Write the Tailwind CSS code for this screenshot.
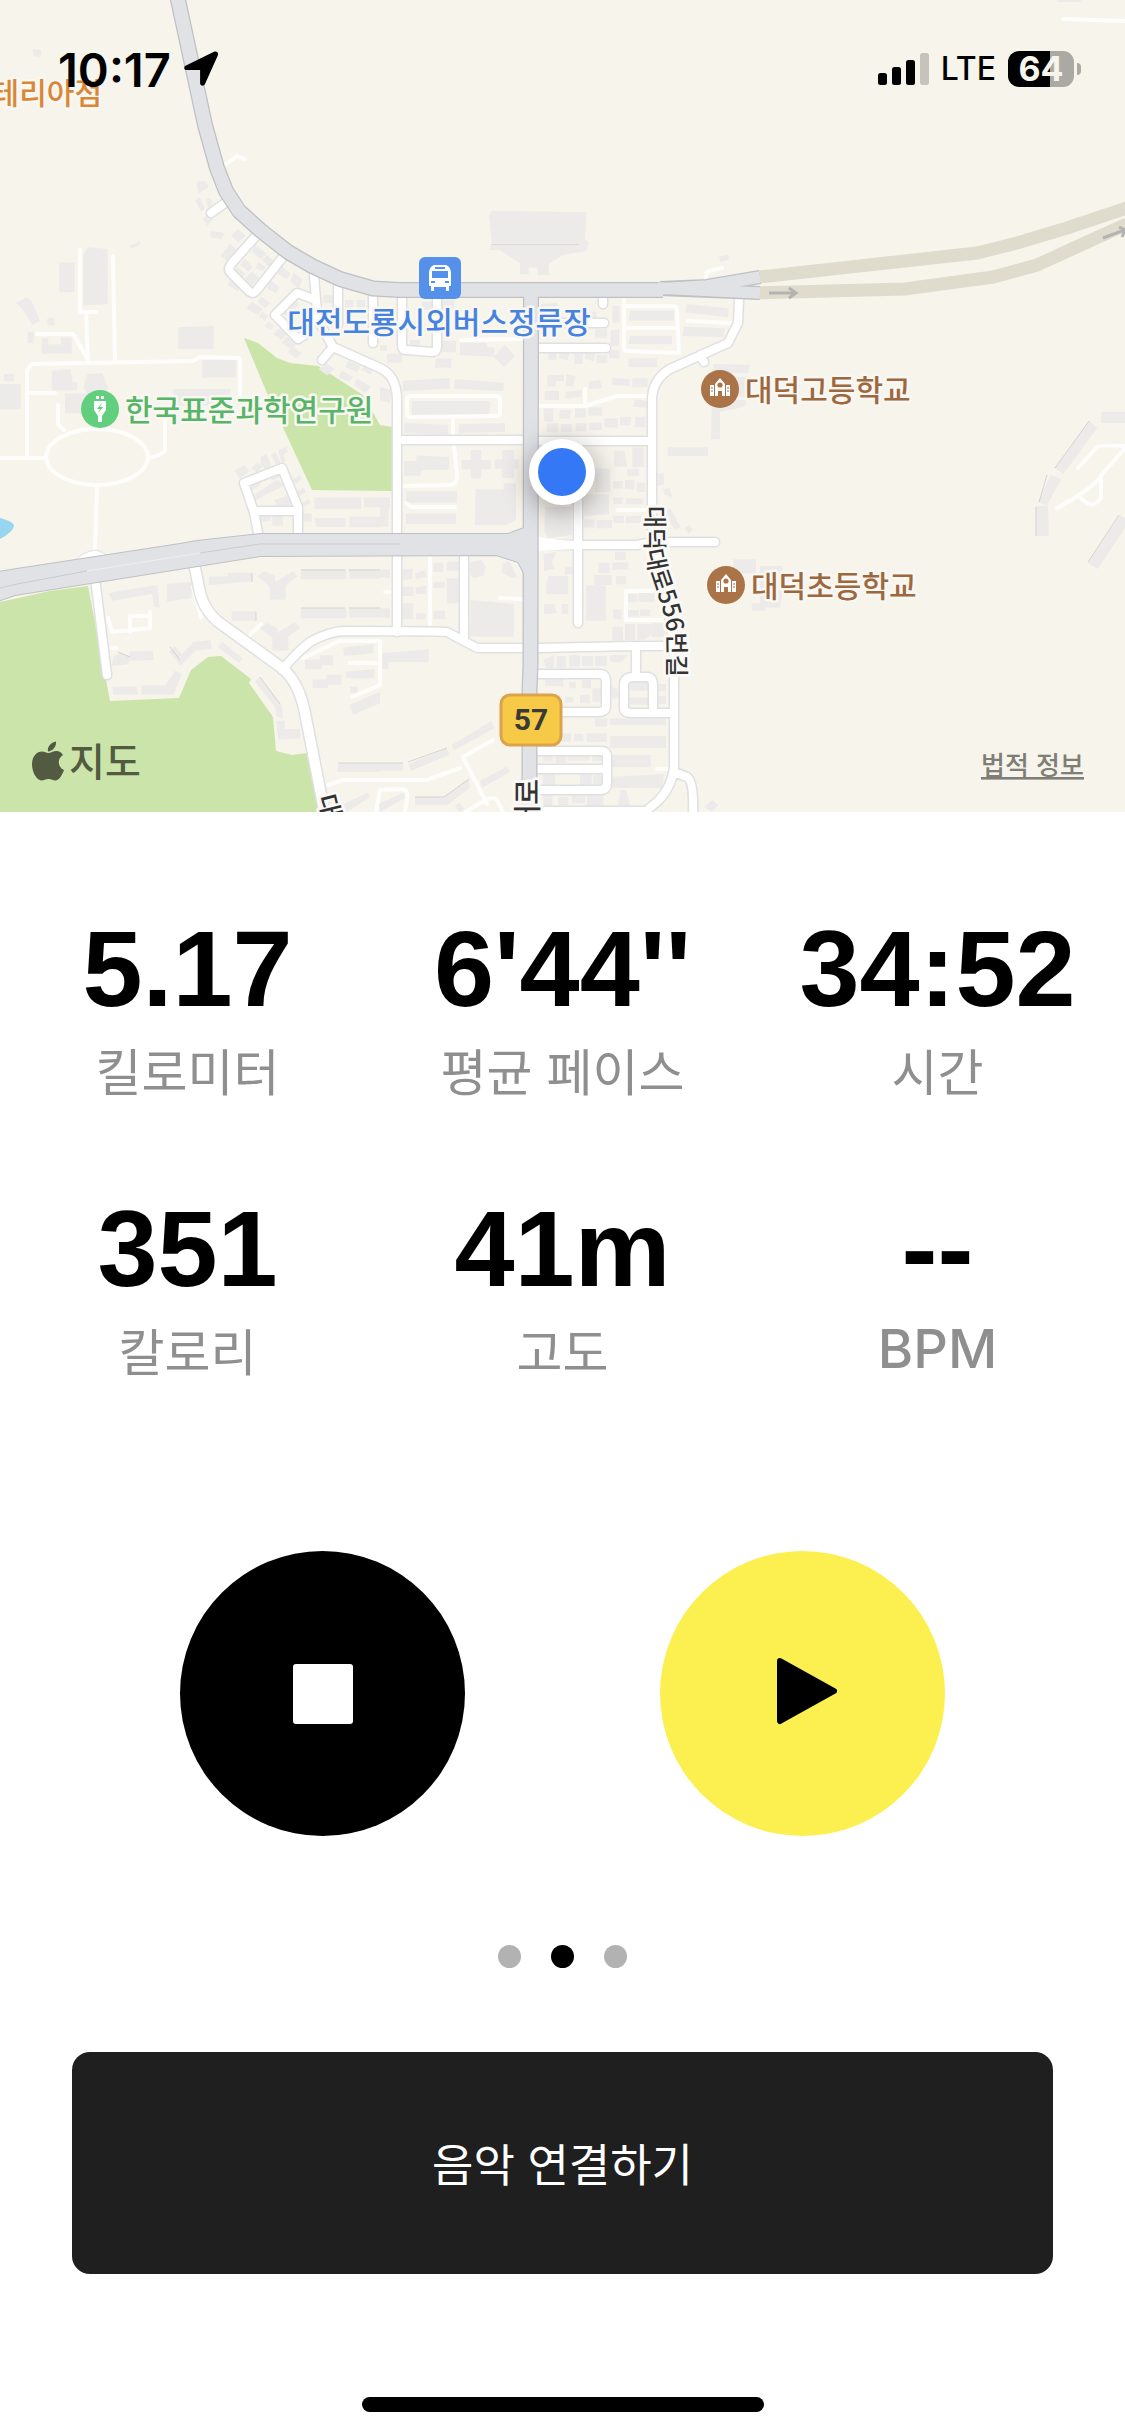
<!DOCTYPE html>
<html lang="ko">
<head>
  <meta charset="UTF-8">
  <meta name="viewport" content="width=device-width, initial-scale=1.0">
  <title>러닝</title>
  <script src="https://cdn.jsdelivr.net/npm/@tailwindcss/browser@4"></script>
</head>
<body class="bg-white text-black font-['Noto_Sans_CJK_KR',sans-serif]">

  <div class="relative">
    <!-- Status bar -->
    <header class="absolute inset-x-0 top-0 flex h-[138px] items-center justify-between pl-[58px] pr-[44px] font-['Inter',sans-serif]">
      <div class="flex items-center gap-3">
        <span class="text-[47px] leading-none font-semibold">10:17</span>
        <svg class="size-9" viewBox="0 0 36 36"><path d="M3 14.5 31 .8c2.400-1.100 4.800.8 3.900 3.400L22 33c-1.200 2.700-4.900 2-4.900-.8V19H3.800C.8 19 .3 15.800 3 14.500z"/></svg>
      </div>
      <div class="flex items-center gap-3">
        <svg class="h-8 w-[51px]" viewBox="0 0 51 32">
          <rect y="20" width="9" height="12" rx="2.500"/>
          <rect x="14" y="14" width="9" height="18" rx="2.500"/>
          <rect x="28" y="7" width="9" height="25" rx="2.500"/>
          <rect x="42" width="9" height="32" rx="2.500" fill="#c6c3bc"/>
        </svg>
        <span class="text-[32px] leading-none font-medium">LTE</span>
        <div class="flex items-center gap-[3px]">
          <span class="flex h-9 w-[66px] items-center justify-center rounded-[11px] bg-linear-to-r from-black from-64% to-[#aba9a3] to-64% text-[34px] leading-none font-bold text-[#f7f4eb]">64</span>
          <span class="h-3 w-1 rounded-r-full bg-[#aba9a3]"></span>
        </div>
      </div>
    </header>

    <!-- Map -->
    <svg class="block h-auto w-full bg-[#f7f4eb]" viewBox="0 0 1125 812" role="img" aria-label="지도">
      <defs>
        <path id="streets" d="M283 257 256 291Q252 295 248 290L231 273Q227 269 232 263L256 236M225 203 211 213M314 275 316 300 297 293 275 315 298 339 306 334M316 300 318 320 333 347M338 287V325M373 295V343M333 347 322 360M333 347 380 368Q397 376 397 400V533M397 555V632M402 297V345Q402 350 406 350L432 352Q437 352 437 346V298M538 348H606M560 323H604M603 296V304M739 299 738 323 728 343 670 369Q652 380 652 400V530C654 580 674 610 674 660V767Q672 787 658 801 652 806 645 812M674 772 687 777Q694 781 693 812M700 355 704 362M397 440H524M538 441H652M538 545H637L653 542H715M578 500V623M464 555V638M523 648H477L447 632Q440 631 343 631 328 632 310 642 296 653 282 670M538 648 633 646H674M636 647V676M624 685Q624 678 632 677H648Q653 678 653 685V713M624 685V708Q624 713 632 713H672M538 674H600Q606 674 606 682V706Q606 712 598 712H538M538 751H602Q607 751 607 757V783Q607 790 600 790H538M538 769H605M538 811H645M258 533 254 512 244 483 282 468 298 507V533M256 511H298M95 578 107 675"/>
        <path id="avenue" d="M194 563 200 593Q204 609 217 621L282 668Q299 682 305 713L325 815"/>
        <path id="highway" d="M177-5 205 125 217 168 226 191 239 211 260 230 288 252 312 266 340 279 373 288.500 400 290H533L603 290H663M531 290 530.500 665 529.500 690V815"/>
        <path id="west" d="M-2 572 17 569 180 544 197 541 260 534H508L524 528H531V573H524L518 562 496 555 260 556 15 595-2 601Z"/>
        <g id="school">
          <circle r="19" fill="#ab7348"/>
          <path d="M-10-4h4V7h-4zM6-4h4V7H6zM-5 7V-5l5-6 5 6V7H2V2h-4v5z" fill="#fff"/>
          <circle cy="-4" r="2.600" fill="#ab7348"/>
          <path d="M-9-1h2m-2 3h2M7-1h2M7 2h2" stroke="#ab7348"/>
        </g>
      </defs>

      <!-- Parks and water -->
      <path fill="#cae4a9" d="M244 338 258 343 277 358 290 363 318 366 363 395 380 425 392 427V491L312 490 267 393ZM0 602 50 591 88 586 106 680 110 701 179 698 191 670 208 657 221 656 251 679 249 683 273 717 276 751 292 755 307 753 325 812H0Z"/>
      <path fill="#98d5f0" d="M0 518Q13 521 14 526 13 532 0 539Z"/>

      <!-- Buildings -->
      <g fill="#edebe9">
        <path transform="scale(.3333)" d="M98 147l26 3-2 21-22-2zM590 545l25-2 12 17-32 21zM585 600l15-8 15 35-12 8zM617 598l15-5 5 20-12 10zM608 655l15-10 17 12-18 20zM630 692l45 8-10 17-33-5zM713 687l25 20-22 20-22-20zM390 737l28-13 4 9-27 13zM178 787h46v90h-46zM250 765l15-23 58 5v165l-73 5zM48 908l32-17 15 13 25 58-22 14-32-50zM142 955l20-2 2 25-22-3zM83 995h18v35H83zM125 1015l20-2v20h38v-20h32v48h-90zM534 982l107-5v70H534zM606 1080h103l-2 53H606zM155 1112l55-5 8 40h14v24h-76zM262 1122l45-2 18 45-20 30h-40l-14-35zM12 1122h30v22H12zM0 1152h62v76H0zM195 1180h100v60H195zM520 1167h171v50H520zM690 730l22 20-15 20-20-18zM675 750l25 22-14 15-25-20zM735 775l22 25-12 15-24-20zM765 735l35 25-15 18-30-22zM800 765l22 18-14 18-22-20zM775 787l22 15-10 12-22-10zM757 815l22 20-25 20-20-20zM712 802l25 20-15 15-20-22zM840 795l32 25-12 18-32-20zM880 815l28 25-12 25-24-20zM810 840l28 20-10 20-28-15zM690 840l30 20-5 15-30-20zM757 905l32 22-15 18-35-20zM785 890l25 20-14 15-24-20zM785 935l20 12-10 15-18-12zM805 965l18 12-10 12-20-10zM835 985l25 18-15 18-25-18zM860 1010l30 20-16 18-30-20zM880 1040l25 20-18 15-24-20zM980 1090l25 18-24 18-25-18zM1025 1112l35 18-12 17-32-15zM1045 1082l38 15-12 20-35-15zM1095 1095l25 12-8 17-28-15zM1070 1135l42 25-15 20-35-25zM970 885h30v25h-30zM1035 900h25v25h-25zM1070 900h25v25h-25zM870 895l28 15-30 40-20-10z"/>
        <path transform="translate(380) scale(.3333)" d="M327 645l8-13 285 5-5 83 12 4-7 30-70 10-43 28v33h-33v-22h-28v20h-26v-33l-60-39h-34l10-18zM1017 770l27-6 3 16-26 6zM920 912l127 13-3 27-127-15zM912 980l123 5-3 27-125-4zM750 932h132v30H746zM750 1007h127l-2 26-130-1zM697 918h22v50h-22zM692 990h26v48h-26zM687 1050h32v25h-32zM745 1075h86v27h-86zM1000 1092l110 2-5 25h-107zM1065 1130h40v60h-40zM505 1057h24v22h-24zM543 1047l27 12-8 22-25-7zM583 1060h25v32h-25zM615 1055l30 5-5 24-25-8zM650 1065h32v24h-32zM502 1125h50v18h-25v17h-24zM560 1122l27 6-8 32-22-3zM627 1145l32-6 8 25-40 4zM697 1133l52 5v20l-53-4zM757 1135h46v26h-46zM495 1172h42v28h-44zM558 1175l48-5-2 20-48 6zM483 912l50-4v22l-50 4zM590 935h60v30h-60zM180 900h42v28h-42zM125 905h30v25h-30zM240 1028h80v12l25 5-4 25-101-5zM375 1035l30 32-32 35-33-32zM185 1022h43v35h-48zM20 1062l45-2v28H22zM168 1075h46v28h-50zM70 1142l139-8v32l-142 8zM225 1138l147 10-2 25-148-7zM95 1204h233v50H95zM0 1035h20v17H0zM90 1020h30v22H90zM0 1160l35 10-5 40-30-10zM645 988h36v25h-36zM765 1198l35 5v20l-40-3z"/>
        <path transform="translate(0 400) scale(.3333)" d="M703 212l30-17 15 18-28 22zM752 205l20-17 15 12-15 18zM782 170l18-8 16 38-20 8-15-15zM812 165l15-8 15 30-12 10zM835 150l25-10 3 15-13 10 8 18-12 8zM750 255l35-18-5 18-25 18zM808 225l25-10 5 15-20 12zM762 285l60-40 10-5 25 15-55 27-36 20zM822 300l50-16 8 30-45 8zM875 240l25-15 5 12-15 15zM890 275l20-12 10 12-20 12zM905 308l22-10 5 12-20 10zM780 342h32v20l-30 3zM817 345h32v32h-32zM903 340h32v25h-32zM943 292h140v35H943zM1092 292h48v30h-48zM943 354h94v27h-87zM1048 350h92v32h-92zM627 530l57-2v-10h73v26l-130 12zM773 528l20-15 32 15v18l55-32 12 15-35 28v42h-48v-38zM902 508h137v30H902zM1048 508h92v28h-92zM902 625h137v30H902zM1048 625h92v28h-92zM695 634h72v28h-72zM325 582l15-7 132-20 7 68-18-3-4-38-120 20zM500 552l75-7v48l-74 12zM780 685l20-17 32 15v15l52-32 18 18-37 25v43h-48v-38zM340 772l20-14 28 10-2 25-50 5zM388 755l70-3 3 28-73 3zM508 755l17-17 20 25 35-37 52-6 4 27-50 5-45 45zM652 740l15-14 60 48-10 15zM338 860h72l5 24h-77zM424 856h72l30-44 20 10-26 62h-96zM765 845l15-15 65 85 5 40-20-5-5-30zM828 962h26v25h45l3 28-67 3zM915 780l45-2v-12h40v30h-35v12h-50zM1030 743l90-10v27l-88 8zM938 838h42v-14h45v30h-40v10h-47zM1038 815l85-8v28h-85zM1050 860h22v18h-20zM1048 915l92-40v35l-80 34zM1015 1090h125v26h-129zM1030 1213l72-35 8 14-70 44h-22zM1130 1215l20-10v20z"/>
        <path transform="translate(380 400) scale(.3333)" d="M95 3h234v29H95zM75 69l130 5v30l-133-5zM237 73l138-4v27l-140 4zM110 166l97 5v38l-85 1v17H72v-44h36zM272 150h32v30h28v28h-28v28h-32v-28h-28v-28h28zM366 150h36v28h14v28h-14v28h-36v-28h-22v-28h22zM287 268h84v-18h37v110l-30 15h-93zM78 274h153v34H78zM78 340h150v32H78zM0 292h30v33H0zM0 325h25v55H0zM0 508h30v25H0zM0 625h30v28H0zM270 485l35-5 12 20-5 25-30 10-12-12zM367 490l20-8 25 50-12 3-35-18zM68 508l30-2v30l-32 5zM105 520l30-10 5 22-32 5zM160 488h30v28h-30zM200 485h37v27h-37zM65 560h35v28H65zM107 562l32-6v26h-32zM160 545h35v20h-35zM200 535h37v75h-37zM65 610h35v48H65zM108 640h30v18h-30zM160 632h35v25h-35zM272 600l130 12v98H270zM7 760l139-12v38H7zM7 783h18v24H7zM215 1035l120-72 8 22-120 66zM85 1092l115-47 8 20-115 47zM0 1090h70v22H0zM105 1190h87l75-52 3 25-68 52h-97zM300 1142l80-42 12 15-85 48zM225 1217l15-10 12 22-15 8zM0 1210l70-32 8 15-78 42zM490 25h30v40h-27zM540 30h35l-8 26h-30zM585 25h32v28h-32zM625 22h42v25h-42zM500 70h34v27h-34zM542 72h34v24h-34zM587 70h32v24h-32zM628 68h38v22h-38zM673 55h40v28h-40zM720 50h32v26h-32zM765 50h32v32h-32zM995 25h25v93h-27zM1000 0h97v20l-97 20zM864 142h120v26H863zM702 152h32l8 48h-40zM757 142h34v60h-34zM645 205h46v72h-46zM605 283h82v60l-75 5zM495 320h80v85l-70 10-12-20zM742 207h34v22h-34zM700 243h28v23h-28zM735 240h28v28h-28zM770 248h26v28h-26zM700 292h28v20h-28zM738 295h52v18h-52zM612 358h32v25h-32zM650 360h46v25h-46zM700 347h32v22h-32zM738 347h46v22h-46zM833 222l18-4 2 35-20 5zM848 268l20-5 10 28-22-5zM855 335l16-10 30 55-15 10-28-42zM913 385l14-10 12 14-14 12zM490 462l40-6-15 30 10 20-32 8zM505 528h60v55h-67v-30zM555 500h32v22h-32zM493 612h30l8 28-40 2zM545 612h20v30h-20zM618 556h60v106h-60zM643 525h52v30h-52zM655 488h35v32h-35zM705 455h32v25h-32zM697 487h48v22h-48zM708 528h30v25h-30zM742 582h30v25h-32zM775 578h48v28h-48zM742 630h34v20h-34zM780 628h30v20h-30zM700 628h25v30h-25zM697 680h32v42h-32zM735 672h30v48h-30zM772 672h42v32l-22 15h-20zM815 670h42v42h-42zM490 780l32-15v40h-22zM530 768h28v35h-28zM568 765h32v35h-32zM605 768h35v30h-35zM645 768h35v30h-35zM688 765h55l-18 22h-32zM495 838l55-2v22h-55zM567 845h20v20h-20zM605 840h28v25h-28zM637 865h28v40h-28zM600 885h30v25h-30zM555 890h25v18h-25zM748 842h62v30h-62zM748 892h60v22h-60zM830 852h28v22h-28zM830 888h28v25h-28zM690 860l20 5 8 22-20 10zM690 955h168v20H690zM645 955h37v25h-37zM490 1060h28v25h-28zM527 1055h30v35h-30zM562 1060h66v22h-66zM637 1058h28v25h-28zM690 1008h168v36H690zM690 1065h122v37H690zM690 1130l160-8v42H690zM500 1115l25 5v35h-37v-30zM600 1122h35v35h-35zM640 1125h25v32h-25zM722 1170h16l14 50-38-5zM490 1180h27v40h-27zM535 1190h30v25h-30zM575 1182h40v28h-40zM620 1182h50v38h-50zM545 1000h28v25h-28zM582 1002h28v22h-28zM620 1000h60v26h-60zM972 1220l25-20 18 15-20 20zM1060 478h68v42h-68zM1115 610h40v22h-40z"/>
        <path transform="translate(760 400) scale(.3333)" d="M1024 35h71v34h-71zM988 62l24 22-102 138-26-18zM872 225l32 12-44 80-25-12zM828 318h36l3 90h-39zM1080 345l15 8v30l-82 124-30-18zM0 498h68v80l-8 45H0z"/>
        <path d="M1057 0h24v2h-24z"/>
      </g>
      <path d="M491 244.500h88" stroke="#dcdbd8"/>
      <path fill="none" stroke="#c9c7c4" stroke-width=".7" d="M301 570h44M349 570h31M301 608h44M349 608h31M252 573v9M256 612v9M338 763h65M408 762 447 748M415 797h29l25-18M260 677l20 27M118 652l12 5M170 647l10 13M1089 421 1055 468M1047 475l-8 27M1119 515l-31 47M1036 507v29"/>

      <!-- Footpaths -->
      <path fill="none" stroke="#fdfdfc" stroke-width="4" stroke-linecap="round" stroke-linejoin="round" d="M80 250V312H96M86 312 88 360M113 256 115 361M37 334H73L87 358M27 458V370L32 364 193 361 200 357 238 358Q240 358 240 361V397M165 420V450Q165 454 148 458M0 458H45M27 393H55M58 405V424L64 430M97 485 95 550M108 618 112 632 150 628V612M130 632V616H150M112 648H117M248 637 261 624M193 587 201 617M303 658 325 648 338 641H380V685L352 697M350 663H378M461 340 523 339M407 400Q407 396 411 396H496Q500 396 500 400V413Q500 416 496 416L411 417Q407 417 407 414ZM453 417V440M454 447 457 475Q457 485 450 485L405 486M406 503 411 507H455M430 558V625M500 598 523 599M385 592H390M666 591H626V620H668M618 510H645M657 769H670M328 785 343 780H427L460 768M493 740 463 757 487 804M466 812 487 799Q494 797 497 800L503 812M376 812 380 790 402 789Q409 790 407 800L405 812M624 297V348Q624 351 628 351L679 353 677 309Q677 306 672 306H624M624 328H678M688 321 732 323M706 277Q706 272 709 271L722 268M540 406H585L617 396H647M585 389V406M226 164 237 156 245 159M1063 19 1125 21M1078 468 1097 447Q1099 445 1125 446M1057 508Q1095 488 1103 473L1127 446M1078 495Q1092 512 1101 498L1101 475"/>
      <ellipse cx="97" cy="457" rx="51" ry="28" fill="none" stroke="#fdfdfc" stroke-width="4"/>

      <!-- Streets -->
      <g fill="none" stroke-linejoin="round">
        <use href="#streets" stroke="#dfe0e1" stroke-width="11" stroke-linecap="round"/>
        <use href="#avenue" stroke="#dfe0e1" stroke-width="13"/>
        <path d="M75 561Q82 552 95 550 105 552 110 559Z" fill="#fff" stroke="#dfe0e1"/>
        <use href="#streets" stroke="#fff" stroke-width="8" stroke-linecap="round"/>
        <use href="#avenue" stroke="#fff" stroke-width="10"/>
        <path d="M538 537 560 540 577 541V549L538 551Z" fill="#fff"/>
        <path d="M508 535 524 526V535Z" fill="#fff"/>
      </g>

      <!-- Ramps -->
      <g fill="none" stroke="#dfdccd" stroke-width="13">
        <path d="M750 278 977 253 1017 243 1067 228 1127 208"/>
        <path d="M750 293 905 289 993 277 1037 265 1083 244 1127 224"/>
      </g>

      <!-- Main roads -->
      <g fill="none" stroke-linejoin="round">
        <use href="#highway" stroke="#bfc0c4" stroke-width="16"/>
        <path d="M660 288 707 286 760 277M660 289 760 293" stroke="#bfc0c4" stroke-width="14"/>
        <use href="#west" stroke="#bfc0c4" stroke-width="2"/>
        <use href="#highway" stroke="#e1e2e6" stroke-width="13.500"/>
        <path d="M658 289 707 286 760 277M658 288 760 293" stroke="#e1e2e6" stroke-width="11.500"/>
        <use href="#west" fill="#e1e2e6"/>
        <path d="M0 588 17 584 87 571M200 553 260 544H400" stroke="#cbcbcf"/>
        <path d="M87 571 200 553" stroke="#efeff1"/>
      </g>
      <g fill="none" stroke="#b3b3b2" stroke-width="3">
        <path d="M769 293H795M789 288l7 5-7 5"/>
        <path d="M1103 238 1125 230M1119 227l6 3-3 7"/>
      </g>

      <!-- Road names -->
      <path id="lane" d="M646 506V545C646 580 668 605 668 645V700" fill="none"/>
      <g fill="#333" stroke="#faf9f5" stroke-width="6" stroke-linejoin="round" class="font-medium [paint-order:stroke]">
        <text class="text-[24px]"><textPath href="#lane">대덕대로556번길</textPath></text>
        <text transform="translate(538 779) rotate(-90)" text-anchor="end" class="text-[28px]">대덕대로</text>
        <text transform="translate(317 797) rotate(76)" class="text-[26px]">대덕대로</text>
      </g>

      <!-- Route 57 shield -->
      <rect x="501" y="695" width="60" height="50" rx="9" fill="#f6c946" stroke="#dba34b" stroke-width="3"/>
      <text x="531" y="730" text-anchor="middle" fill="#393a35" class="font-['Roboto',sans-serif] text-[30px] font-bold">57</text>

      <!-- Places -->
      <rect x="419" y="257" width="42" height="42" rx="6" fill="#5591eb"/>
      <path fill="#fff" d="M434 265h12q5 2 5 8v13h-2v5h-3v-4h-12v4h-3v-5h-2v-13q0-6 5-8z"/>
      <path fill="#5591eb" d="M435 267h10v2h-10zM432 271h16v7h-16zM431 281h4v2h-4zM445 281h4v2h-4z"/>
      <circle cx="100" cy="409" r="19" fill="#61cf7e"/>
      <path fill="#fff" d="M96 396h3v3h-3zM101 396h3v3h-3zM94 401h12v9l-4 6v6h-4v-6l-4-6z"/>
      <path fill="#61cf7e" d="M102 403l-5 6h3l-2 4 5-6h-3z"/>
      <use href="#school" x="720" y="389"/>
      <use href="#school" x="726" y="585"/>
      <g stroke="#f8f7f2" stroke-width="5" stroke-linejoin="round" class="text-[30px] font-medium [paint-order:stroke]">
        <text x="102" y="104" text-anchor="end" fill="#d98737">테리아점</text>
        <text x="439" y="333" text-anchor="middle" fill="#4682e0">대전도룡시외버스정류장</text>
        <text x="125" y="421" fill="#58b567">한국표준과학연구원</text>
        <text x="745" y="401" fill="#9d6840">대덕고등학교</text>
        <text x="751" y="597" fill="#9d6840">대덕초등학교</text>
      </g>

      <!-- Current position -->
      <circle cx="562" cy="472" r="33" fill="#fff" class="drop-shadow-[0_6px_14px_rgba(0,0,0,0.35)]"/>
      <circle cx="562" cy="472" r="24" fill="#3478f6"/>

      <!-- Attribution -->
      <g fill="#525b41">
        <path d="M48 751.500c-1-5 3-9 8-10 .5 5-3 9.500-8 10zM48 753c3 0 5-2 8.500-2 2.500 0 5 1.500 6.500 4-6 3.500-5.500 12 1 15-2 5-5 10.500-8.500 10.500-2.500 0-4-1.500-7-1.500s-4.500 1.500-7 1.500c-5 0-9.500-9-9.500-16 0-8.500 5-13 10-13 2.500 0 4.500 1.500 6 1.500z"/>
        <text x="69" y="776" class="text-[39px] font-medium">지도</text>
      </g>
      <a href="#legal"><text x="981" y="775" fill="#7e7d76" class="text-[26px] font-medium underline decoration-3 underline-offset-[5px]">법적 정보</text></a>
    </svg>
  </div>

  <!-- Run stats -->
  <main class="flex flex-col items-center">
    <dl class="grid w-full grid-cols-3 gap-y-20 pt-[92px] text-center">
      <div class="flex flex-col-reverse">
        <dt class="text-[50px] leading-[70px] text-[#8f8f8f]">킬로미터</dt>
        <dd class="font-['Liberation_Sans',sans-serif] text-[108px] leading-[130px] font-bold">5.17</dd>
      </div>
      <div class="flex flex-col-reverse">
        <dt class="text-[50px] leading-[70px] text-[#8f8f8f]">평균 페이스</dt>
        <dd class="font-['Liberation_Sans',sans-serif] text-[108px] leading-[130px] font-bold">6'44''</dd>
      </div>
      <div class="flex flex-col-reverse">
        <dt class="text-[50px] leading-[70px] text-[#8f8f8f]">시간</dt>
        <dd class="font-['Liberation_Sans',sans-serif] text-[108px] leading-[130px] font-bold">34:52</dd>
      </div>
      <div class="flex flex-col-reverse">
        <dt class="text-[50px] leading-[70px] text-[#8f8f8f]">칼로리</dt>
        <dd class="font-['Liberation_Sans',sans-serif] text-[108px] leading-[130px] font-bold">351</dd>
      </div>
      <div class="flex flex-col-reverse">
        <dt class="text-[50px] leading-[70px] text-[#8f8f8f]">고도</dt>
        <dd class="font-['Liberation_Sans',sans-serif] text-[108px] leading-[130px] font-bold">41m</dd>
      </div>
      <div class="flex flex-col-reverse">
        <dt class="font-['Inter',sans-serif] text-[54px] leading-[70px] font-medium text-[#8f8f8f]">BPM</dt>
        <dd class="font-['Liberation_Sans',sans-serif] text-[108px] leading-[130px] font-bold">--</dd>
      </div>
    </dl>

    <!-- Controls -->
    <div class="mt-[167px] flex gap-[195px]">
      <button aria-label="정지" class="flex size-[285px] items-center justify-center rounded-full bg-black">
        <span class="size-[60px] rounded-[3px] bg-white"></span>
      </button>
      <button aria-label="재개" class="flex size-[285px] items-center justify-center rounded-full bg-[#fcf050] pb-1 pl-2">
        <svg class="h-[70px] w-[66px]" viewBox="0 0 66 70"><path d="M6 4 60 34 6 64Z" stroke="#000" stroke-width="6" stroke-linejoin="round"/></svg>
      </button>
    </div>

    <!-- Page dots -->
    <div class="mt-[109px] flex gap-[30px]">
      <span class="size-[23px] rounded-full bg-[#b2b2b2]"></span>
      <span class="size-[23px] rounded-full bg-black"></span>
      <span class="size-[23px] rounded-full bg-[#b2b2b2]"></span>
    </div>

    <div class="mt-[84px] w-full px-[72px]">
      <button class="h-[222px] w-full rounded-[18px] bg-[#1f1f1f] text-[45px] text-white">음악 연결하기</button>
    </div>

    <!-- Home indicator -->
    <div class="mt-[123px] mb-6 h-[15px] w-[402px] rounded-full bg-black"></div>
  </main>

</body>
</html>
